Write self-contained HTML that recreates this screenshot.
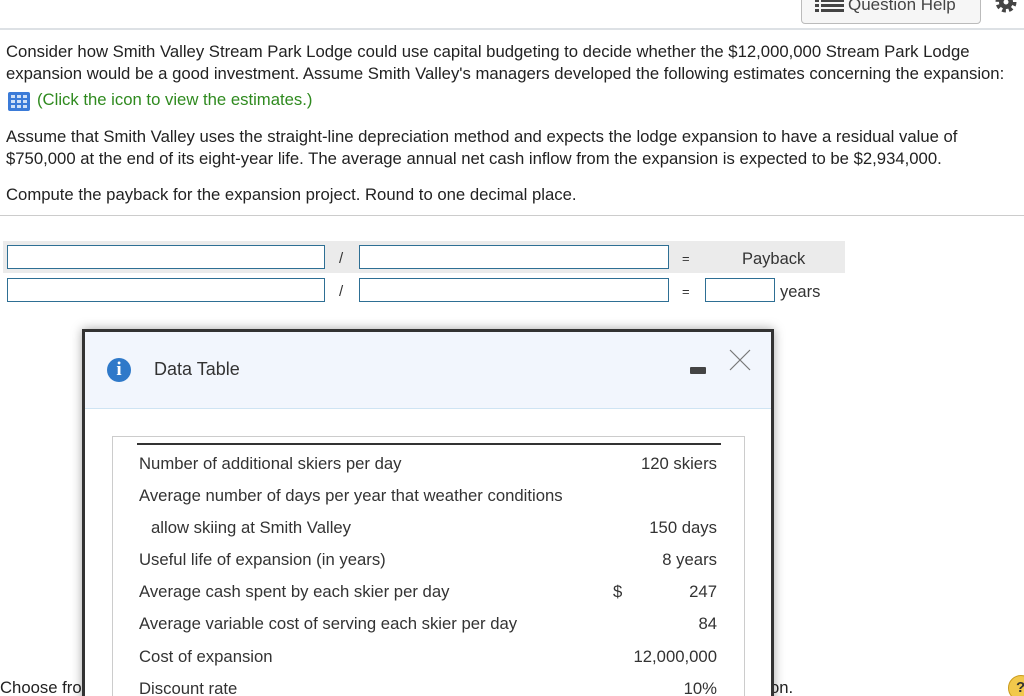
<!DOCTYPE html>
<html><head><meta charset="utf-8"><style>
html,body{margin:0;width:1024px;height:696px;overflow:hidden}
body{background:#fff;font-family:"Liberation Sans",Arial,sans-serif;color:#222;position:relative}
.a{position:absolute}
p{margin:0}
.t{font-size:16.7px;line-height:21.5px;left:6px;white-space:nowrap}
.inp{position:absolute;height:24px;border:1px solid #2e6f94;background:#fff;box-sizing:border-box}
.row{position:absolute;font-size:16.7px;color:#333;white-space:nowrap}
.r{position:absolute;right:307px;font-size:16.7px;color:#333;white-space:nowrap}
</style></head><body>
<div class="a" style="left:801px;top:-8px;width:178px;height:30px;border:1px solid #bbb;border-radius:4px;background:#f6f6f6;"></div>
<div class="a" style="left:815px;top:-1px;width:30px;height:14px">
 <svg width="30" height="14"><g fill="#444"><rect x="0" y="0" width="4" height="3"/><rect x="0" y="5" width="4" height="3"/><rect x="0" y="10" width="4" height="3"/><rect x="6" y="0" width="23" height="3"/><rect x="6" y="5" width="23" height="3"/><rect x="6" y="10" width="23" height="3"/></g></svg>
</div>
<div class="a" style="left:848px;top:-5px;font-size:17px;color:#444">Question Help</div>
<div class="a" style="left:993px;top:-8px;width:26px;height:26px"><svg width="26" height="26" viewBox="0 0 26 26"><circle cx="13" cy="10" r="8" fill="none" stroke="#444" stroke-width="5" stroke-dasharray="3.5 2.8"/><circle cx="13" cy="10" r="7" fill="#444"/><circle cx="13" cy="10" r="2.5" fill="#fff"/></svg></div>
<div class="a" style="left:0;top:28px;width:1024px;height:2px;background:#dde1e5"></div>

<p class="a t" style="top:41px">Consider how Smith Valley Stream Park Lodge could use capital budgeting to decide whether the $12,000,000 Stream Park Lodge<br>expansion would be a good investment. Assume Smith Valley's managers developed the following estimates concerning the expansion:</p>
<div class="a" style="left:8px;top:92px;width:22px;height:19px;background:#3b7bd8;border-radius:2px">
<svg width="22" height="19"><g fill="#cfe0f7"><rect x="3" y="3" width="4" height="3"/><rect x="9" y="3" width="4" height="3"/><rect x="15" y="3" width="4" height="3"/><rect x="3" y="8" width="4" height="3"/><rect x="9" y="8" width="4" height="3"/><rect x="15" y="8" width="4" height="3"/><rect x="3" y="13" width="4" height="3"/><rect x="9" y="13" width="4" height="3"/><rect x="15" y="13" width="4" height="3"/></g></svg></div>
<p class="a" style="left:37px;top:89px;font-size:16.7px;line-height:21px;color:#2f8a1f">(Click the icon to view the estimates.)</p>
<p class="a t" style="top:126px">Assume that Smith Valley uses the straight-line depreciation method and expects the lodge expansion to have a residual value of<br>$750,000 at the end of its eight-year life. The average annual net cash inflow from the expansion is expected to be $2,934,000.</p>
<p class="a t" style="top:184px">Compute the payback for the expansion project. Round to one decimal place.</p>
<div class="a" style="left:0;top:215px;width:1024px;height:1px;background:#ccc"></div>

<div class="a" style="left:3px;top:241px;width:842px;height:32px;background:#ebebeb"></div>
<div class="inp" style="left:7px;top:245px;width:318px"></div>
<div class="inp" style="left:359px;top:245px;width:310px"></div>
<div class="inp" style="left:7px;top:278px;width:318px"></div>
<div class="inp" style="left:359px;top:278px;width:310px"></div>
<div class="inp" style="left:705px;top:278px;width:70px"></div>
<div class="row" style="left:339px;top:250px;font-size:15px">/</div>
<div class="row" style="left:339px;top:283px;font-size:15px">/</div>
<div class="row" style="left:682px;top:251px;font-size:13px">=</div>
<div class="row" style="left:682px;top:284px;font-size:13px">=</div>
<div class="row" style="left:742px;top:250px;font-size:16.5px">Payback</div>
<div class="row" style="left:780px;top:283px;font-size:16.5px">years</div>

<p class="a" style="left:0;top:678px;font-size:16.7px">Choose fro</p>
<p class="a" style="left:770px;top:678px;font-size:16.7px">on.</p>
<div class="a" style="left:1008px;top:675px;width:24px;height:24px;border-radius:50%;background:#f2c84b;border:1px solid #c99a1a;font-weight:bold;font-size:15px;line-height:24px;text-indent:7px;color:#333">?</div>

<div class="a" style="left:82px;top:329px;width:692px;height:380px;border:3px solid #333;box-sizing:border-box;background:#fff;box-shadow:0 0 10px rgba(0,0,0,.35)">
 <div class="a" style="left:0;top:0;width:686px;height:76px;background:#f2f6fd;border-bottom:1px solid #cfe4f3"></div>
 <div class="a" style="left:22px;top:26px;width:24px;height:24px;border-radius:50%;background:#2f79c9;color:#fff;font-family:'Liberation Serif',serif;font-weight:bold;font-size:19px;line-height:24px;text-align:center">i</div>
 <div class="a" style="left:69px;top:27px;font-size:18px;color:#333">Data Table</div>
 <div class="a" style="left:605px;top:35px;width:16px;height:7px;background:#444;border-radius:1px"></div>
 <svg class="a" style="left:644px;top:17px" width="22" height="22"><path d="M1 1L21 21M21 1L1 21" stroke="#777" stroke-width="1.2"/></svg>
 <div class="a" style="left:27px;top:104px;width:631px;height:280px;border:1px solid #ccc"></div>
 <div class="a" style="left:52px;top:111px;width:584px;height:2px;background:#333"></div>
</div>
<div class="row" style="left:139px;top:454px">Number of additional skiers per day</div><div class="r" style="top:454px">120 skiers</div>
<div class="row" style="left:139px;top:486px">Average number of days per year that weather conditions</div>
<div class="row" style="left:151px;top:518px">allow skiing at Smith Valley</div><div class="r" style="top:518px">150 days</div>
<div class="row" style="left:139px;top:550px">Useful life of expansion (in years)</div><div class="r" style="top:550px">8 years</div>
<div class="row" style="left:139px;top:582px">Average cash spent by each skier per day</div><div class="row" style="left:613px;top:582px">$</div><div class="r" style="top:582px">247</div>
<div class="row" style="left:139px;top:614px">Average variable cost of serving each skier per day</div><div class="r" style="top:614px">84</div>
<div class="row" style="left:139px;top:647px">Cost of expansion</div><div class="r" style="top:647px">12,000,000</div>
<div class="row" style="left:139px;top:679px">Discount rate</div><div class="r" style="top:679px">10%</div>
</body></html>
